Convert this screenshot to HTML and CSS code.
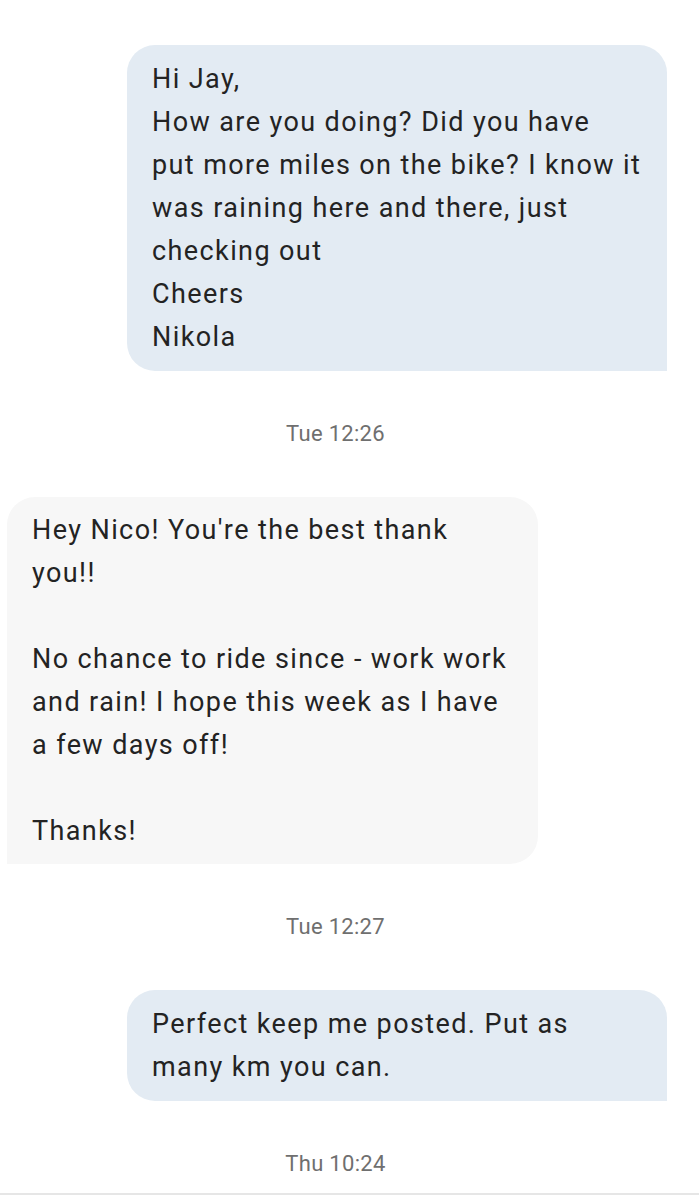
FILE: index.html
```html
<!DOCTYPE html>
<html lang="en">
<head>
    <meta charset="UTF-8">
    <meta name="viewport" content="width=device-width, initial-scale=1.0">
    <title>Conversation</title>
    <link rel="stylesheet" href="styles.css">
</head>
<body>
    <div class="thread">
        <div class="message sent">Hi Jay,
How are you doing? Did you have
put more miles on the bike? I know it
was raining here and there, just
checking out
Cheers
Nikola</div>

        <div class="timestamp">Tue 12:26</div>

        <div class="message received">Hey Nico! You're the best thank
you!!

No chance to ride since - work work
and rain! I hope this week as I have
a few days off!

Thanks!</div>

        <div class="timestamp">Tue 12:27</div>

        <div class="message sent">Perfect keep me posted. Put as
many km you can.</div>

        <div class="timestamp">Thu 10:24</div>
    </div>
    <div class="divider"></div>
</body>
</html>
```

FILE: styles.css
```css
body {
    font-family: Roboto, 'Noto Sans', sans-serif;
    margin: 0;
    background: #ffffff;
    color: #232323;
}

.thread {
    display: flex;
    flex-direction: column;
    padding-top: 45px;
}

.message {
    box-sizing: border-box;
    font-size: 27px;
    line-height: 43px;
    letter-spacing: 1.4px;
    padding: 13px 25px 12px 25px;
    white-space: pre;
    overflow: hidden;
    border-radius: 28px;
}

.sent {
    align-self: flex-end;
    width: 540px;
    margin-right: 32px;
    background: #e3ebf3;
    border-bottom-right-radius: 0;
}

.received {
    align-self: flex-start;
    width: 531px;
    margin-left: 7px;
    padding-top: 12px;
    padding-bottom: 11px;
    background: #f7f7f7;
    border-bottom-left-radius: 0;
}

.timestamp {
    text-align: center;
    font-size: 22px;
    line-height: 24px;
    letter-spacing: 0.3px;
    color: #6f6f6f;
    margin: 51px 0;
    padding-right: 28px;
}

.thread .timestamp:last-child {
    margin-bottom: 17px;
}

.divider {
    height: 2px;
    background: #e6e6e6;
}
```
